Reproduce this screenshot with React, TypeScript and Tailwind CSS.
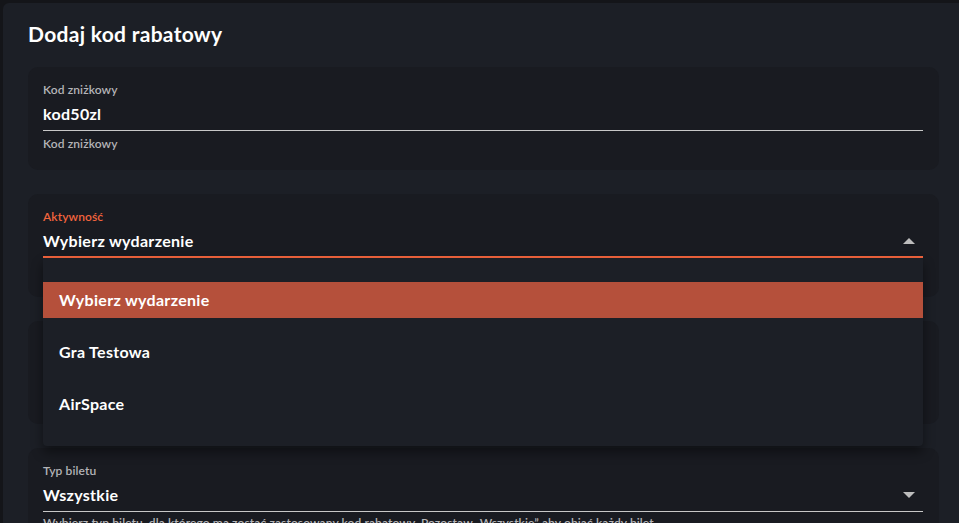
import React from "react";

const font = { fontFamily: "Lato, 'Noto Sans', sans-serif" };

function Caret({ up }: { up?: boolean }) {
  return (
    <svg width="12" height="6" viewBox="0 0 12 6" className="shrink-0">
      {up ? <path d="M0 6 L6 0 L12 6 Z" fill="#bdbdbd" /> : <path d="M0 0 L6 6 L12 0 Z" fill="#bdbdbd" />}
    </svg>
  );
}

function Card({ children, className = "" }: { children?: React.ReactNode; className?: string }) {
  return <div className={`relative h-[103px] rounded-[10px] bg-[#191b21] px-[15px] pr-[16px] pt-[16px] ${className}`}>{children}</div>;
}

const label = "text-[12px] font-semibold leading-[14px] tracking-[0.1px] text-[#b4b4b8]";
const value = "text-[16px] font-bold tracking-[0.3px] text-white";

export default function App() {
  return (
    <div style={font} className="h-[523px] w-[959px] overflow-hidden bg-[#141519] pl-[3px] pt-[3px]">
      <div className="h-full w-full rounded-tl-[6px] bg-[#1c1f26] pl-[25px] pr-[20px]">
        <div className="flex h-[64px] items-center pb-[2px] text-[21px] font-bold tracking-[0.3px] text-white">Dodaj kod rabatowy</div>
        <div className="flex flex-col gap-6">
          <Card>
            <div className={label}>Kod zniżkowy</div>
            <div className={`mt-[2px] flex h-[32px] items-center border-b border-[#c8c8c8] pb-[1px] ${value}`}>kod50zl</div>
            <div className={`mt-[6px] ${label}`}>Kod zniżkowy</div>
          </Card>
          <Card className="z-10">
            <div className="text-[12px] font-semibold leading-[14px] tracking-[0.1px] text-[#f2643d]">Aktywność</div>
            <div className={`mt-[2px] flex h-[32px] items-center justify-between border-b-2 border-[#f2643d] pb-[1px] pr-[8px] ${value}`}>
              <span>Wybierz wydarzenie</span>
              <Caret up />
            </div>
            <div className="absolute left-[15px] right-[16px] top-[64px] flex flex-col gap-4 rounded-b-[4px] bg-[#1c1f26] py-6 shadow-[0_6px_12px_rgba(0,0,0,0.45)]">
              <div className={`flex h-[36px] items-center bg-[#b5503b] px-4 ${value}`}>Wybierz wydarzenie</div>
              <div className={`flex h-[36px] items-center px-4 ${value}`}>Gra Testowa</div>
              <div className={`flex h-[36px] items-center px-4 ${value}`}>AirSpace</div>
            </div>
          </Card>
          <Card />
          <Card>
            <div className={label}>Typ biletu</div>
            <div className={`mt-[2px] flex h-[32px] items-center justify-between border-b border-[#c8c8c8] pb-[1px] pr-[8px] ${value}`}>
              <span>Wszystkie</span>
              <Caret />
            </div>
            <div className={`mt-[4px] whitespace-nowrap ${label}`}>
              Wybierz typ biletu, dla którego ma zostać zastosowany kod rabatowy. Pozostaw „Wszystkie” aby objąć każdy bilet.
            </div>
          </Card>
        </div>
      </div>
    </div>
  );
}
